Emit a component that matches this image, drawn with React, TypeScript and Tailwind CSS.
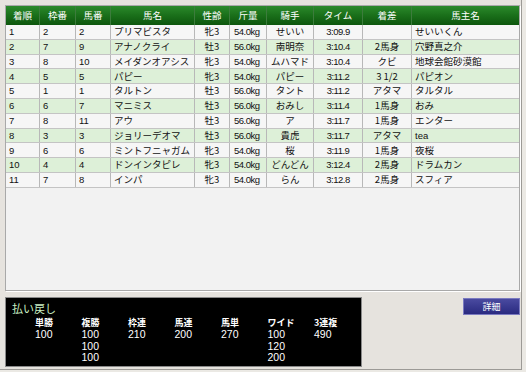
import React from "react";

const cjk = { fontFamily: '"Noto Sans CJK JP", "Liberation Sans", sans-serif' };
const lat = { fontFamily: '"Liberation Sans", "Noto Sans CJK JP", sans-serif' };

const headers = ["着順", "枠番", "馬番", "馬名", "性齢", "斤量", "騎手", "タイム", "着差", "馬主名"];

const rows: string[][] = [
  ["1", "2", "2", "プリマビスタ", "牝3", "54.0kg", "せいい", "3:09.9", "", "せいいくん"],
  ["2", "7", "9", "アナノクライ", "牡3", "56.0kg", "南明奈", "3:10.4", "2馬身", "穴野真之介"],
  ["3", "8", "10", "メイダンオアシス", "牝3", "54.0kg", "ムハマド", "3:10.4", "クビ", "地球会館砂漠館"],
  ["4", "5", "5", "パピー", "牝3", "54.0kg", "パピー", "3:11.2", "3 1/2", "パピオン"],
  ["5", "1", "1", "タルトン", "牡3", "56.0kg", "タント", "3:11.2", "アタマ", "タルタル"],
  ["6", "6", "7", "マニミス", "牡3", "56.0kg", "おみし", "3:11.4", "1馬身", "おみ"],
  ["7", "8", "11", "アウ", "牡3", "56.0kg", "ア", "3:11.7", "1馬身", "エンター"],
  ["8", "3", "3", "ジョリーデオマ", "牡3", "56.0kg", "貴虎", "3:11.7", "アタマ", "tea"],
  ["9", "6", "6", "ミントフニャガム", "牝3", "54.0kg", "桜", "3:11.9", "1馬身", "夜桜"],
  ["10", "4", "4", "ドンインタピレ", "牝3", "54.0kg", "どんどん", "3:12.4", "2馬身", "ドラムカン"],
  ["11", "7", "8", "インパ", "牝3", "54.0kg", "らん", "3:12.8", "2馬身", "スフィア"],
];

const grid = "grid grid-cols-[34px_36px_35px_84px_35px_37px_47px_49px_49px_1fr]";

const cellAlign = [
  "justify-start pl-[3px]",
  "justify-start pl-[3px]",
  "justify-start pl-[3px]",
  "justify-start pl-[3px]",
  "justify-center",
  "justify-start pl-[4px]",
  "justify-center",
  "justify-center",
  "justify-center",
  "justify-start pl-[3px]",
];

const payLabels = ["単勝", "複勝", "枠連", "馬連", "馬単", "ワイド", "3連複"];
const payValues: string[][] = [["100"], ["100", "100", "100"], ["210"], ["200"], ["270"], ["100", "120", "200"], ["490"]];

export default function App() {
  return (
    <div className="w-[526px] h-[372px] bg-[#ebe9e4] overflow-hidden">
      <div className="w-[522px] h-[370px] bg-[#e6e3de] border-r border-b border-[#9c9a96] pt-[5px] pl-[5px]">
        <div className="w-[515px] h-[286px] bg-[#f2f2f2] border border-[#a9a9a9] shadow-[1px_1px_0_#ffffff] overflow-hidden">
          <div className={`${grid} h-[19px] bg-gradient-to-b from-[#2b8a2b] via-[#1a6f1a] to-[#0d560d]`}>
            {headers.map((h, i) => (
              <div
                key={i}
                className="flex items-center justify-center text-white text-[9.5px] border-r border-[#3c7c3c] last:border-r-0"
                style={cjk}
              >
                {h}
              </div>
            ))}
          </div>
          {rows.map((r, ri) => (
            <div
              key={ri}
              className={`${grid} h-[14.8px] border-b border-[#c4c4c4] ${ri % 2 === 1 ? "bg-[#ddf0d8]" : "bg-[#f6f6f6]"}`}
            >
              {r.map((c, ci) => (
                <div
                  key={ci}
                  className={`flex items-center ${cellAlign[ci]} text-[9.5px] leading-none text-[#111] border-r border-[#b8b8b8] last:border-r-0 whitespace-nowrap overflow-hidden ${ci === 5 || ci === 7 ? "tracking-[-0.5px]" : ""}`}
                  style={/^[0-9.:a-z ]+$/.test(c) ? lat : cjk}
                >
                  {c}
                </div>
              ))}
            </div>
          ))}
        </div>
        <div className="flex justify-between items-start mt-[6px] w-[515px]">
          <div className="w-[357px] h-[70px] bg-black border border-[#8a8a8a]">
            <div className="text-[11px] leading-[13px] text-[#c9efc3] pl-[6px] pt-[4px]" style={cjk}>
              払い戻し
            </div>
            <div className="flex pl-[29px] mt-[1px]">
              {payLabels.map((l, i) => (
                <div key={i} className="w-[46.5px] flex flex-col">
                  <div className="text-[9px] leading-[13px] text-white font-bold" style={cjk}>
                    {l}
                  </div>
                  {payValues[i].map((v, vi) => (
                    <div key={vi} className="text-[10.5px] leading-[11.5px] text-white" style={lat}>
                      {v}
                    </div>
                  ))}
                </div>
              ))}
            </div>
          </div>
          <div
            className="w-[57px] h-[17px] mt-[1px] flex items-center justify-center bg-gradient-to-b from-[#4a4aa0] to-[#2a2a80] border border-[#7a7ac0] text-white text-[9px]"
            style={cjk}
          >
            詳細
          </div>
        </div>
      </div>
    </div>
  );
}
